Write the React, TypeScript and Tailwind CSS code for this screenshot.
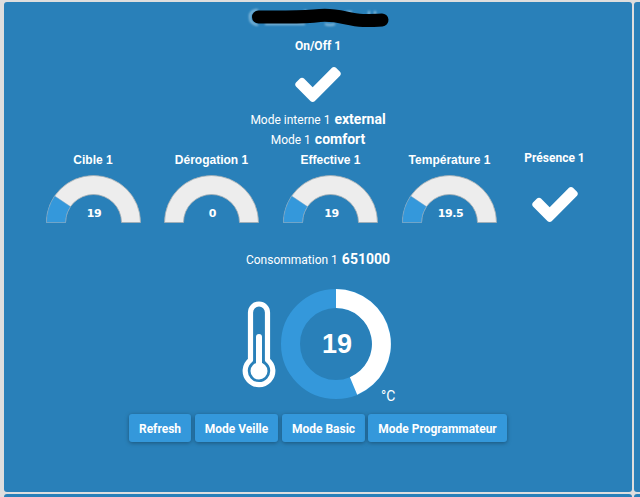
import React from "react";

function Check({ className = "" }: { className?: string }) {
  return (
    <svg viewBox="121 334 1550 1188" className={`h-[35px] w-[46px] fill-white ${className}`}>
      <path d="M1671 566q0 40-28 68l-724 724-136 136q-28 28-68 28t-68-28l-136-136-362-362q-28-28-28-68t28-68l136-136q28-28 68-28t68 28l294 295 656-657q28-28 68-28t68 28l136 136q28 28 28 68z" />
    </svg>
  );
}

function Gauge({ label, value, active, className }: { label: string; value: string; active: boolean; className: string }) {
  return (
    <div className={`flex flex-col items-center ${className}`}>
      <div className="mt-px h-5 whitespace-nowrap font-['Liberation_Sans',sans-serif] text-[12px] leading-5 font-bold">{label}</div>
      <div className="mt-1 grid h-[50px] w-[95px] place-items-center">
        <svg viewBox="0 0 95 50" className="col-start-1 row-start-1 h-[50px] w-[95px]">
          <path d="M.5 48.5a47 47 0 0 1 94 0h-19a28 28 0 0 0-56 0z" fill="#ededed" stroke="#a5adb3" strokeWidth=".8" />
          {active && <path d="M.5 48.5A47 47 0 0 1 8.7 22L24.4 32.6A28 28 0 0 0 19.5 48.5z" fill="#3498db" stroke="#78a6c8" strokeWidth=".5" />}
        </svg>
        <span className="col-start-1 row-start-1 mt-[29px] ml-[2px] font-['DejaVu_Sans',sans-serif] text-[11px] leading-4 font-bold tracking-[-0.4px]">{value}</span>
      </div>
    </div>
  );
}

function Reading({ label, value }: { label: string; value: string }) {
  return (
    <div className="flex h-5 items-baseline justify-center gap-1 leading-5 whitespace-nowrap">
      <span className="text-[12px]">{label}</span>
      <strong className="text-[14px] font-bold">{value}</strong>
    </div>
  );
}

function Button({ children, className }: { children: string; className: string }) {
  return (
    <button className={`h-7 rounded-[3px] bg-[#3498db] pt-px text-center text-[12px] font-bold whitespace-nowrap shadow-[0_1px_4px_rgba(0,0,0,0.35)] ${className}`}>
      {children}
    </button>
  );
}

export default function App() {
  return (
    <div className="grid h-[497px] w-[640px] grid-cols-[628px_6px] grid-rows-[490px_3px] gap-x-[2px] gap-y-[2px] overflow-hidden bg-[#dedede] pt-[2px] pl-1 font-['Roboto',sans-serif] text-white">
      <main className="flex flex-col items-center rounded-[3px] bg-[#2980b9]">
        <div className="h-[35px]">
          <svg width="150" height="30" viewBox="243 2 150 30">
            <defs>
              <filter id="soft" filterUnits="userSpaceOnUse" x="243" y="2" width="150" height="30"><feGaussianBlur stdDeviation="1" /></filter>
              <filter id="edge" filterUnits="userSpaceOnUse" x="243" y="2" width="150" height="30"><feGaussianBlur stdDeviation=".7" /></filter>
            </defs>
            <g filter="url(#soft)" fill="none" stroke="#b9dcef" strokeWidth="2" opacity=".7">
              <path d="M258 10q-8 0-8 7t8 8M265 24h40M304 11h3M335 24q-5 2-10 0M346 12h6M369 11v4M375 11v4" />
            </g>
            <path d="M258.5 17C280 16.5 300 18 320 15.5C339 14 347 20 363 20.5Q375 20.5 382 20" fill="none" stroke="#000" strokeWidth="13" strokeLinecap="round" filter="url(#edge)" />
          </svg>
        </div>
        <div className="h-[19px] text-[12px] leading-[19px] font-bold">On/Off 1</div>
        <Check className="mt-[11px] mb-[7px]" />
        <Reading label="Mode interne 1" value="external" />
        <Reading label="Mode 1" value="comfort" />
        <div className="mr-[2px] flex h-[100px]">
          <Gauge label="Cible 1" value="19" active className="w-[118px]" />
          <Gauge label="Dérogation 1" value="0" active={false} className="w-[119px]" />
          <Gauge label="Effective 1" value="19" active className="w-[119px]" />
          <Gauge label="Température 1" value="19.5" active className="w-[119px]" />
          <div className="flex w-[91px] flex-col items-center text-[12px] leading-[18px] font-bold">
            Présence 1
            <Check className="mt-[20px]" />
          </div>
        </div>
        <Reading label="Consommation 1" value="651000" />
        <div className="flex h-[145px] w-[154px] items-start pt-[20px]">
          <svg width="34" height="88" viewBox="242 301 34 88" className="mt-3 ml-[1px] shrink-0">
            <path d="M250.5 360V312.5a8.5 8.5 0 0 1 17 0V360A13.8 13.8 0 1 1 250.5 360z" fill="none" stroke="#fff" strokeWidth="5.2" strokeLinejoin="round" />
            <path d="M259 337v34" stroke="#fff" strokeWidth="6" strokeLinecap="round" />
            <circle cx="259" cy="371" r="8.5" fill="#fff" />
          </svg>
          <div className="ml-[5px] grid h-[110px] w-[110px] shrink-0 place-items-center">
            <svg viewBox="-55 -55 110 110" className="col-start-1 row-start-1 h-[110px] w-[110px]">
              <circle r="45.5" fill="none" stroke="#3498db" strokeWidth="19" />
              <path d="M0-55A55 55 0 0 1 21.2 50.7L13.9 33.2A36 36 0 0 0 0-36z" fill="#fff" />
            </svg>
            <strong className="col-start-1 row-start-1 ml-[2px] font-['Liberation_Sans',sans-serif] text-[27px] leading-8 font-bold">19</strong>
          </div>
          <span className="mt-[97px] -ml-[10px] text-[14px] leading-5">°C</span>
        </div>
        <div className="flex gap-[4px]">
          <Button className="w-[62px]">Refresh</Button>
          <Button className="w-[83px]">Mode Veille</Button>
          <Button className="w-[83px]">Mode Basic</Button>
          <Button className="-ml-px w-[139px]">Mode Programmateur</Button>
        </div>
      </main>
      <div className="rounded-l-[3px] bg-[#2980b9]" />
      <div className="rounded-t-[3px] bg-[#2980b9]" />
      <div className="rounded-tl-[3px] bg-[#2980b9]" />
    </div>
  );
}
